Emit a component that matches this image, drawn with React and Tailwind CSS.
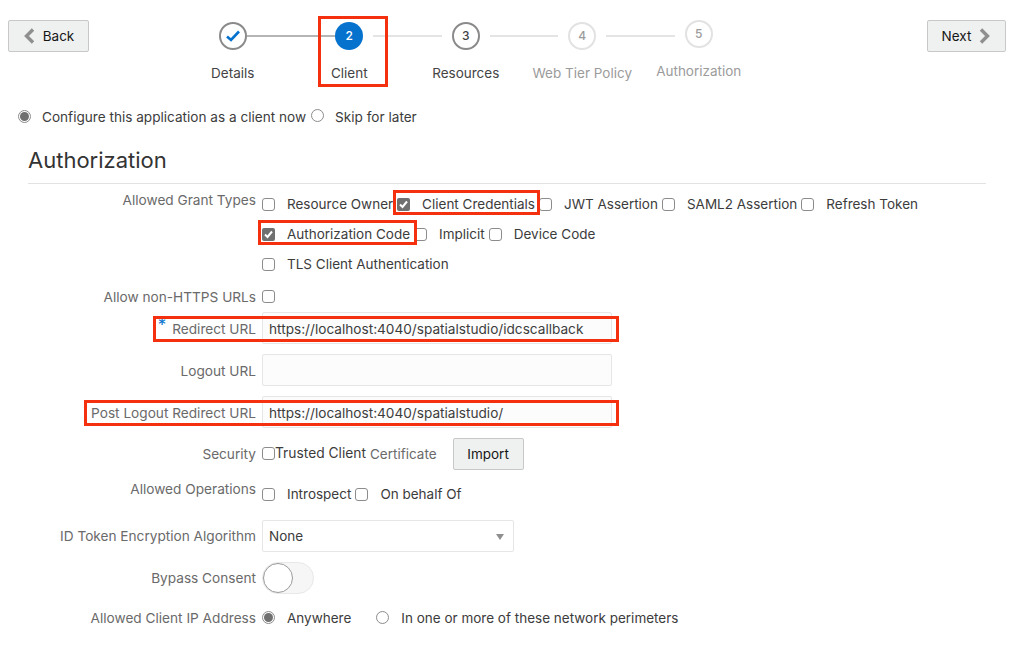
const font = { fontFamily: "Inter, 'Noto Sans', sans-serif" };

function Checkbox({ checked, className = "" }) {
  if (checked) {
    return (
      <span className={"flex h-[13px] w-[13px] shrink-0 items-center justify-center rounded-[2px] bg-[#707070] " + className}>
        <svg width="11" height="11" viewBox="0 0 11 11" fill="none" stroke="#fff" strokeWidth="2">
          <path d="M2 5.5 L4.5 8 L9 2.5" />
        </svg>
      </span>
    );
  }
  return <span className={"block h-[13px] w-[13px] shrink-0 rounded-[3px] border border-[#8c8c8c] bg-white " + className} />;
}

function Radio({ checked, className = "" }) {
  return (
    <span className={"flex h-[13px] w-[13px] shrink-0 items-center justify-center rounded-full border border-[#8c8c8c] bg-white " + className}>
      {checked && <span className="block h-[9px] w-[9px] rounded-full bg-[#707070]" />}
    </span>
  );
}

function Option({ label, checked, className = "" }) {
  return (
    <div className={"flex items-center " + className}>
      <Checkbox checked={checked} />
      <span className="ml-3 whitespace-nowrap">{label}</span>
    </div>
  );
}

function Row({ label, height, className = "", labelClass = "", children }) {
  return (
    <div className={"flex items-center " + className} style={{ height }}>
      <div className={"w-[256px] shrink-0 whitespace-nowrap text-right text-[13.65px] text-[#6a6a6a] " + labelClass}>{label}</div>
      <div className="ml-[6px] flex min-w-0 flex-1 items-center text-[#3c3c3c]">{children}</div>
    </div>
  );
}

function Step({ n, label, state, left, right, className = "" }) {
  const circle = {
    done: "border-2 border-[#8a8a8a] bg-white",
    current: "bg-[#0572ce] text-white",
    todo: "border-2 border-[#8a8a8a] bg-white text-[#444]",
    disabled: "border-2 border-[#e2e2e2] bg-white text-[#9b9b9b]",
  }[state];
  return (
    <div className={"flex w-[116.5px] shrink-0 flex-col " + className}>
      <div className="flex h-[28px] items-center">
        <span className="flex flex-1 items-center">
          <span className={"h-[2px] flex-1 " + (left || "")} />
        </span>
        <span className={"flex h-[28px] w-[28px] shrink-0 items-center justify-center rounded-full text-[12px] font-medium " + circle}>
          {state === "done" ? (
            <svg width="16" height="14" viewBox="0 0 16 14" fill="none" stroke="#0572ce" strokeWidth="2.6">
              <path d="M2 7.5 L6 11 L14 2.5" />
            </svg>
          ) : (
            n
          )}
        </span>
        <span className="flex flex-1 items-center">
          <span className={"h-[2px] flex-1 " + (right || "")} />
        </span>
      </div>
      <div className={"mt-[13px] whitespace-nowrap text-center leading-[20px] " + (state === "disabled" ? "text-[#9b9b9b]" : "text-[#444]")}>{label}</div>
    </div>
  );
}

function NavButton({ children, className = "" }) {
  return (
    <button className={"flex h-[32px] items-center justify-center rounded-[2px] border border-[#c8c8c8] bg-[#eff0f0] text-[#161616] " + className}>
      {children}
    </button>
  );
}

function RedBox({ className }) {
  return <div className={"pointer-events-none absolute border-[3px] border-[#f4300f] " + className} />;
}

export default function App() {
  return (
    <div className="relative h-[646px] w-[1017px] overflow-hidden bg-white text-[13.5px] leading-[20px]" style={font}>
      <div className="flex items-start pl-2 pr-[11px] pt-5">
        <NavButton className="w-[81px]">
          <svg width="12" height="16" viewBox="0 0 12 16" fill="none" stroke="#8f8f8f" strokeWidth="3.4">
            <path d="M10 1.5 L3.5 8 L10 14.5" />
          </svg>
          <span className="ml-[8px]">Back</span>
        </NavButton>
        <div className="ml-[85.5px] mt-[2px] flex">
          <Step n={1} label="Details" state="done" right="bg-[#b5b5b5]" />
          <Step n={2} label="Client" state="current" left="bg-[#b5b5b5]" right="ml-[10px] bg-[#e4e4e4]" />
          <Step n={3} label="Resources" state="todo" left="mr-[10px] bg-[#e4e4e4]" right="ml-[10px] bg-[#e4e4e4]" />
          <Step n={4} label="Web Tier Policy" state="disabled" left="mr-[10px] bg-[#e4e4e4]" right="ml-[10px] bg-[#e4e4e4]" />
          <Step n={5} label="Authorization" state="disabled" left="mr-[10px] mt-[4px] bg-[#e4e4e4]" className="-mt-[2px]" />
        </div>
        <NavButton className="ml-auto w-[79px]">
          <span className="mr-[8px]">Next</span>
          <svg width="12" height="16" viewBox="0 0 12 16" fill="none" stroke="#8f8f8f" strokeWidth="3.4">
            <path d="M2 1.5 L8.5 8 L2 14.5" />
          </svg>
        </NavButton>
      </div>

      <div className="mt-[24px] flex h-[20px] items-center pl-[18px] text-[13.6px] text-[#3c3c3c]">
        <Radio checked className="-mt-[2px]" />
        <span className="ml-[11px]">Configure this application as a client now</span>
        <Radio className="-mt-[3px] ml-[5px]" />
        <span className="ml-[11px]">Skip for later</span>
      </div>

      <h2 className="ml-[28px] mt-[18px] text-[22px] font-normal leading-[30px] text-[#333]">Authorization</h2>
      <div className="ml-[28px] mt-[8px] h-px w-[958px] bg-[#e2e2e2]" />

      <div className="mt-[5px]">
        <div className="flex h-[30px] items-start">
          <div className="mt-px w-[256px] shrink-0 text-right text-[13.65px] text-[#6a6a6a]">Allowed Grant Types</div>
          <div className="ml-[6px] flex h-[30px] items-center gap-[4px] text-[#3c3c3c]">
            <Option label="Resource Owner" />
            <Option label="Client Credentials" checked />
            <Option label="JWT Assertion" />
            <Option label="SAML2 Assertion" />
            <Option label="Refresh Token" />
          </div>
        </div>
        <Row height="30px">
          <div className="flex items-center gap-[4px]">
            <Option label="Authorization Code" checked />
            <Option label="Implicit" />
            <Option label="Device Code" />
          </div>
        </Row>
        <Row height="30px">
          <Option label="TLS Client Authentication" />
        </Row>
        <Row height="30px" className="mt-[3px]" label="Allow non-HTTPS URLs">
          <Checkbox className="-mt-[2px]" />
        </Row>

        <Row
          height="32px"
          labelClass="mt-[2px]"
          label={
            <>
              <span className="relative -top-[3px] mr-[6px] text-[17px] leading-none text-[#0572ce]">*</span>Redirect URL
            </>
          }
        >
          <div className="flex h-[32px] w-[350px] items-center rounded-[2px] border border-[#e6e6e6] bg-[#fcfcfc] pl-[6px] pt-[2px] text-[13.63px]">https://localhost:4040/spatialstudio/idcscallback</div>
        </Row>
        <Row height="32px" className="mt-[10px]" labelClass="mt-[2px]" label="Logout URL">
          <div className="h-[32px] w-[350px] rounded-[2px] border border-[#e6e6e6] bg-[#fcfcfc]" />
        </Row>
        <Row height="32px" className="mt-[10px]" labelClass="mt-[2px]" label="Post Logout Redirect URL">
          <div className="flex h-[32px] w-[350px] items-center rounded-[2px] border border-[#e6e6e6] bg-[#fcfcfc] pl-[6px] pt-[2px] text-[13.63px]">https://localhost:4040/spatialstudio/</div>
        </Row>

        <Row height="32px" className="mt-[10px]" label="Security">
          <Checkbox className="-mt-px" />
          <span className="-mt-[2px] whitespace-nowrap text-[13.8px]">Trusted Client</span>
          <span className="ml-[4px] whitespace-nowrap text-[#6a6a6a]">Certificate</span>
          <button className="ml-[16px] h-[32px] w-[71px] rounded-[2px] border border-[#c8c8c8] bg-[#eff0f0] text-[#161616]">Import</button>
        </Row>
        <Row height="32px" className="mt-[8px]" labelClass="-mt-[10px]" label="Allowed Operations">
          <Option label="Introspect" />
          <Option label="On behalf Of" className="ml-[4px]" />
        </Row>
        <Row height="32px" className="mt-[10px]" label="ID Token Encryption Algorithm">
          <div className="flex h-[32px] w-[252px] items-center justify-between rounded-[2px] border border-[#e6e6e6] bg-white pl-[6px] pr-[9px]">
            <span>None</span>
            <span className="mt-px h-0 w-0 border-x-[4.5px] border-t-[6px] border-x-transparent border-t-[#8f8f8f]" />
          </div>
        </Row>
        <Row height="32px" className="mt-[10px]" label="Bypass Consent">
          <div className="h-[32px] w-[52px] rounded-full border border-[#e8e8e8] bg-[#f6f6f6]">
            <div className="h-[30px] w-[30px] rounded-full border border-[#9a9a9a] bg-white" />
          </div>
        </Row>
        <Row height="30px" className="mt-[9px]" label="Allowed Client IP Address">
          <Radio checked className="-mt-[2px]" />
          <span className="ml-3">Anywhere</span>
          <Radio className="-mt-[2px] ml-[25px]" />
          <span className="ml-3">In one or more of these network perimeters</span>
        </Row>
      </div>

      <RedBox className="left-[318px] top-[16px] h-[71px] w-[70px]" />
      <RedBox className="left-[393px] top-[190px] h-[25px] w-[147px]" />
      <RedBox className="left-[258px] top-[220px] h-[25px] w-[159px]" />
      <RedBox className="left-[153px] top-[316px] h-[26px] w-[466px]" />
      <RedBox className="left-[84px] top-[400px] h-[26px] w-[535px]" />
    </div>
  );
}
